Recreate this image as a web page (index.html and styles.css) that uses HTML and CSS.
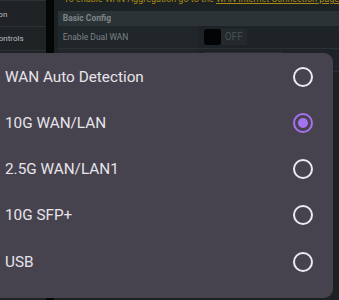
FILE: index.html
```html
<!DOCTYPE html>
<html lang="en">
<head>
  <meta charset="UTF-8">
  <meta name="viewport" content="width=device-width, initial-scale=1.0">
  <title>Dual WAN</title>
  <link rel="stylesheet" href="styles.css">
</head>
<body>
  <div class="page">
    <!-- Left menu -->
    <div class="sidebar">
      <div class="side-item"><span class="cut">WAN Aggregation</span></div>
      <div class="side-item"><span class="cut-short">Parental Controls</span></div>
    </div>
    <div class="divider"></div>

    <!-- Main settings -->
    <div class="main">
      <p class="note">To enable WAN Aggregation go to the <u>WAN Internet Connection page</u></p>
      <div class="table-head">Basic Config</div>
      <div class="row">
        <div class="label">Enable Dual WAN</div>
        <div class="value">
          <span class="toggle"></span><span class="toggle-text">OFF</span>
        </div>
      </div>
      <div class="row">
        <div class="label"></div>
        <div class="value"><span class="select"></span></div>
      </div>
    </div>
  </div>

  <!-- Picker dialog -->
  <div class="dialog">
    <div class="option"><span>WAN Auto Detection</span><span class="radio"></span></div>
    <div class="option"><span>10G WAN/LAN</span><span class="radio checked"></span></div>
    <div class="option"><span>2.5G WAN/LAN1</span><span class="radio"></span></div>
    <div class="option"><span>10G SFP+</span><span class="radio"></span></div>
    <div class="option"><span>USB</span><span class="radio"></span></div>
  </div>
</body>
</html>
```

FILE: styles.css
```css
body {
  margin: 0;
  background: #1c2022;
  font-family: Roboto, "Noto Sans", sans-serif;
  overflow: hidden;
}
.page {
  display: flex;
  height: 300px;
}
.sidebar {
  width: 48px;
  background: #1f2326;
  border-top: 1px solid #2c3134;
  padding-top: 2px;
  overflow: hidden;
}
.side-item {
  height: 23px;
  display: flex;
  align-items: center;
  font-size: 8px;
  color: #b9bfc2;
  border-bottom: 1px solid #2c3134;
  white-space: nowrap;
  overflow: hidden;
}
.cut {
  margin-left: -56px;
}
.cut-short {
  margin-left: -38px;
}
.divider {
  width: 8px;
  background: #050606;
}
.main {
  flex: 1;
  padding-left: 4px;
  background: #1c2123;
}
.note {
  margin: -6px 0 0 6px;
  font-size: 9px;
  line-height: 10px;
  color: #a88a12;
  white-space: nowrap;
  overflow: hidden;
}
.table-head {
  margin-top: 7px;
  height: 15px;
  line-height: 15px;
  padding-left: 5px;
  background: #2c3336;
  color: #7f878b;
  font-size: 8.5px;
  font-weight: bold;
}
.row {
  display: flex;
  height: 22px;
  border-bottom: 1px solid #2a3033;
  background: #20262a;
}
.label {
  width: 135px;
  padding-left: 5px;
  font-size: 8.5px;
  color: #7b8386;
  line-height: 22px;
}
.value {
  flex: 1;
  display: flex;
  align-items: center;
  padding-left: 6px;
  background: #1d2326;
}
.toggle {
  width: 17px;
  height: 16px;
  border-radius: 3px;
  background: #030405;
}
.toggle-text {
  height: 16px;
  line-height: 16px;
  padding: 0 4px;
  background: #23292c;
  color: #4a5053;
  font-size: 10px;
}
.select {
  align-self: flex-start;
  margin-top: 3px;
  width: 78px;
  height: 20px;
  background: #2b3134;
}
.dialog {
  position: absolute;
  top: 53px;
  left: 0;
  width: 333px;
  height: 245px;
  background: #46434f;
  border-radius: 0 9px 9px 0;
  padding-top: 0.5px;
  box-sizing: border-box;
}
.option {
  display: flex;
  align-items: center;
  justify-content: space-between;
  height: 46.25px;
  padding: 0 20px 0 5px;
  font-size: 15.3px;
  color: #e8e4ea;
}
.radio {
  width: 20px;
  height: 20px;
  box-sizing: border-box;
  border: 2px solid #eeeaf0;
  border-radius: 50%;
  display: flex;
  align-items: center;
  justify-content: center;
}
.radio.checked {
  border-color: #a771f2;
}
.radio.checked::after {
  content: "";
  width: 10px;
  height: 10px;
  border-radius: 50%;
  background: #a771f2;
}
```
